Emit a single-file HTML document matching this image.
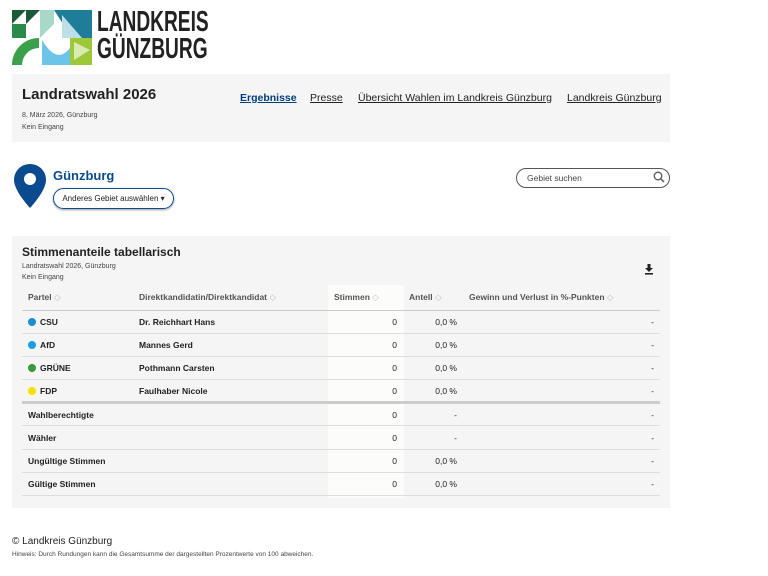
<!DOCTYPE html>
<html><head><meta charset="utf-8"><style>
*{margin:0;padding:0;box-sizing:border-box}
body{width:768px;height:576px;background:#fff;font-family:"Liberation Sans",sans-serif;color:#222;position:relative;overflow:hidden}
.a{position:absolute}
.box{background:#f5f5f5}
.nav a{position:absolute;font-size:10.5px;color:#222;text-decoration:underline;top:92px;white-space:nowrap}
table{border-collapse:collapse;position:absolute;left:22px;top:285px;width:638px;font-size:8.5px}
td,th{height:23.2px;border-bottom:1px solid #ddd;padding:0 6px;white-space:nowrap}
th{text-align:left;font-weight:bold;color:#555;font-size:8.5px;height:25px;border-bottom:1px solid #ccc}
td.b{font-weight:bold}
.r{text-align:right}
.hl{background:#fcfcfa}
.dot{display:inline-block;width:8px;height:8px;border-radius:50%;margin-right:4px;vertical-align:-1px}
.thick td{border-bottom:3px solid #ccc}
.s{color:#bbb;font-weight:normal}
</style></head><body>
<svg class="a" style="left:12px;top:10px" width="80" height="55" viewBox="0 0 80 55">
<polygon points="0,0 14,0 0,14" fill="#1a5a3a"/><polygon points="14,0 28,0 14,14" fill="#1a5a3a"/><polygon points="0,14 14,14 14,28 0,28" fill="#2a8a4a"/>
<polygon points="28,0 42,0 42,14 28,28" fill="#a8d8c8"/><polygon points="42,0 80,0 80,28 60,28" fill="#1f7d9a"/><polygon points="50,5 70,28 50,28" fill="#bde0e8"/>
<path d="M0,55 A27,27 0 0 1 27,28 L27,38 A17,17 0 0 0 10,55 Z" fill="#3aa04a"/>
<path d="M30,30 Q45,55 58,38 L58,55 L30,55 Z" fill="#6cc4e8"/>
<polygon points="58,28 80,28 80,55 58,55" fill="#9cc83a"/><polygon points="62,32 78,40 62,50" fill="#d8ecb0"/>
</svg>
<div class="a" style="left:97px;top:9px;font:bold 29px/27px 'Liberation Sans',sans-serif;color:#222;transform:scaleX(0.66);transform-origin:left">LANDKREIS<br>GÜNZBURG</div>
<div class="a box" style="left:12px;top:74px;width:658px;height:68px"></div>
<div class="a" style="left:22px;top:86px;font-size:15px;font-weight:bold">Landratswahl 2026</div>
<div class="a" style="left:22px;top:110px;font-size:7px;line-height:12px;color:#444">8. März 2026, Günzburg<br>Kein Eingang</div>
<div class="nav"><a style="left:240px;color:#003d7c;font-weight:bold">Ergebnisse</a><a style="left:310px">Presse</a><a style="left:358px">Übersicht Wahlen im Landkreis Günzburg</a><a style="left:567px">Landkreis Günzburg</a></div>
<svg class="a" style="left:14px;top:164px" width="32" height="44" viewBox="0 0 32 44"><path d="M16,0 C7,0 0,7 0,16 C0,27 16,44 16,44 C16,44 32,27 32,16 C32,7 25,0 16,0Z" fill="#0b4a8f"/><circle cx="16" cy="15" r="6" fill="#fff"/></svg>
<div class="a" style="left:53px;top:168px;font-size:13px;font-weight:bold;color:#0b4a8f">Günzburg</div>
<div class="a" style="left:53px;top:188px;width:121px;height:21px;border:1px solid #0b4a8f;border-radius:11px;font-size:8px;line-height:19px;text-align:center;box-shadow:0 1px 2px #999">Anderes Gebiet auswählen ▾</div>
<div class="a" style="left:516px;top:168px;width:154px;height:20px;border:1px solid #555;border-radius:10px;font-size:8.5px;line-height:18px;padding-left:10px;color:#444">Gebiet suchen</div>
<svg class="a" style="left:653px;top:171px" width="12" height="12" viewBox="0 0 12 12"><circle cx="5" cy="5" r="3.8" fill="none" stroke="#555" stroke-width="1.3"/><line x1="8" y1="8" x2="11" y2="11" stroke="#555" stroke-width="1.5"/></svg>
<div class="a box" style="left:12px;top:236px;width:658px;height:272px"></div>
<div class="a hl" style="left:328px;top:285px;width:76px;height:213px"></div>
<div class="a" style="left:22px;top:245px;font-size:12px;font-weight:bold">Stimmenanteile tabellarisch</div>
<div class="a" style="left:22px;top:261px;font-size:7px;line-height:11px;color:#444">Landratswahl 2026, Günzburg<br>Kein Eingang</div>
<svg class="a" style="left:644px;top:264px" width="10" height="11" viewBox="0 0 10 11"><path d="M3.5,0 H6.5 V4 H9 L5,8 L1,4 H3.5Z" fill="#222"/><rect x="1" y="9" width="8" height="1.6" fill="#222"/></svg>
<table>
<tr><th style="width:111px">Partel <span class="s">◇</span></th><th style="width:195px">Direktkandidatin/Direktkandidat <span class="s">◇</span></th><th style="width:75px">Stimmen <span class="s">◇</span></th><th style="width:60px">Antell <span class="s">◇</span></th><th colspan="2">Gewinn und Verlust in %-Punkten <span class="s">◇</span></th></tr>
<tr><td class="b"><span class="dot" style="background:#1a8fd0"></span>CSU</td><td class="b">Dr. Reichhart Hans</td><td class="r">0</td><td class="r">0,0 %</td><td colspan="2" class="r">-</td></tr>
<tr><td class="b"><span class="dot" style="background:#1aa0e0"></span>AfD</td><td class="b">Mannes Gerd</td><td class="r">0</td><td class="r">0,0 %</td><td colspan="2" class="r">-</td></tr>
<tr><td class="b"><span class="dot" style="background:#3a9a3a"></span>GRÜNE</td><td class="b">Pothmann Carsten</td><td class="r">0</td><td class="r">0,0 %</td><td colspan="2" class="r">-</td></tr>
<tr class="thick"><td class="b"><span class="dot" style="background:#f5e000"></span>FDP</td><td class="b">Faulhaber Nicole</td><td class="r">0</td><td class="r">0,0 %</td><td colspan="2" class="r">-</td></tr>
<tr><td class="b" colspan="2">Wahlberechtigte</td><td class="r">0</td><td class="r">-</td><td colspan="2" class="r">-</td></tr>
<tr><td class="b" colspan="2">Wähler</td><td class="r">0</td><td class="r">-</td><td colspan="2" class="r">-</td></tr>
<tr><td class="b" colspan="2">Ungültige Stimmen</td><td class="r">0</td><td class="r">0,0 %</td><td colspan="2" class="r">-</td></tr>
<tr><td class="b" colspan="2">Gültige Stimmen</td><td class="r">0</td><td class="r">0,0 %</td><td colspan="2" class="r">-</td></tr>
</table>
<div class="a" style="left:12px;top:536px;font-size:10px">© Landkreis Günzburg</div>
<div class="a" style="left:12px;top:551px;font-size:6.5px;color:#444">Hinweis: Durch Rundungen kann die Gesamtsumme der dargestellten Prozentwerte von 100 abweichen.</div>
</body></html>
